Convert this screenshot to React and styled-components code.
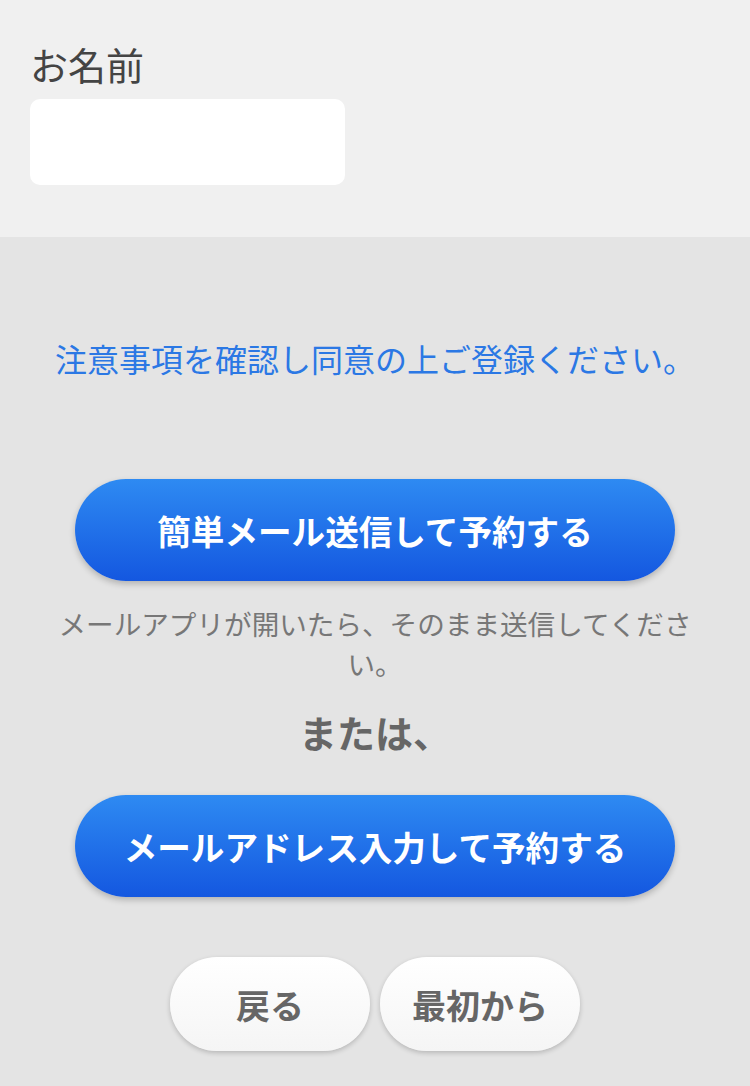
import React from 'react'
import styled, { createGlobalStyle } from 'styled-components'

const GlobalStyle = createGlobalStyle`
  body {
    margin: 0;
    background: #e4e4e4;
    font-family: "Noto Sans CJK JP", "Noto Sans", sans-serif;
  }
`

const App = () => {
  return (
    <Page>
      <GlobalStyle />
      <FormArea>
        <Label>お名前</Label>
        <NameInput type="text" />
      </FormArea>
      <Actions>
        <Notice>注意事項を確認し同意の上ご登録ください。</Notice>
        <PrimaryButton $top={97}>簡単メール送信して予約する</PrimaryButton>
        <Caption>メールアプリが開いたら、そのまま送信してください。</Caption>
        <Or>または、</Or>
        <PrimaryButton $top={37}>メールアドレス入力して予約する</PrimaryButton>
        <NavRow>
          <NavButton>戻る</NavButton>
          <NavButton>最初から</NavButton>
        </NavRow>
      </Actions>
    </Page>
  )
}

export default App

const Page = styled.div`
  min-height: 1086px;
  background: #e4e4e4;
`
const FormArea = styled.div`
  background: #f0f0f0;
  padding: 38px 30px 52px;
  display: flex;
  flex-direction: column;
  align-items: flex-start;
`
const Label = styled.div`
  font-size: 38px;
  line-height: 52px;
  color: #444;
  margin-bottom: 9px;
`
const NameInput = styled.input`
  width: 315px;
  height: 86px;
  box-sizing: border-box;
  border: none;
  border-radius: 10px;
  background: #fff;
  outline: none;
`
const Actions = styled.div`
  display: flex;
  flex-direction: column;
  align-items: center;
  padding: 0 30px 35px;
`
const Notice = styled.div`
  margin-top: 97px;
  font-size: 32px;
  line-height: 48px;
  color: #2b78e4;
  white-space: nowrap;
`
const PrimaryButton = styled.button`
  margin-top: ${p => p.$top}px;
  width: 600px;
  height: 102px;
  border: none;
  border-radius: 51px;
  background: linear-gradient(#2e8af2, #1457e0);
  box-shadow: 0 3px 6px rgba(0, 0, 0, 0.22);
  color: #fff;
  font-family: inherit;
  font-size: 33.6px;
  font-weight: 700;
  cursor: pointer;
`
const Caption = styled.div`
  margin-top: 22px;
  width: 660px;
  text-align: center;
  font-size: 27.6px;
  line-height: 40px;
  color: #777;
`
const Or = styled.div`
  margin-top: 23px;
  font-size: 38px;
  line-height: 52px;
  font-weight: 700;
  color: #666;
`
const NavRow = styled.div`
  margin-top: 60px;
  display: flex;
  gap: 10px;
`
const NavButton = styled.button`
  width: 200px;
  height: 94px;
  border: none;
  border-radius: 47px;
  background: linear-gradient(#ffffff, #f5f5f5);
  box-shadow: 0 2px 5px rgba(0, 0, 0, 0.2);
  color: #666;
  font-family: inherit;
  font-size: 34px;
  font-weight: 700;
  cursor: pointer;
`
